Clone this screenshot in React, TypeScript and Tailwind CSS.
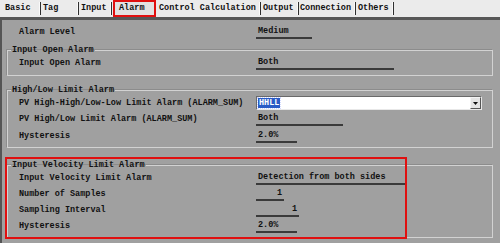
import React from "react";

const TABS = [
  { label: "Basic", cls: "w-[41px] pl-[5px]" },
  { label: "Tag", cls: "w-[38px] pl-[2px]" },
  { label: "Input", cls: "w-[33px] pl-[2px]" },
  { label: "Alarm", cls: "w-[43px] pl-[4px]", active: true },
  { label: "Control Calculation", cls: "w-[104px] pl-[2px]" },
  { label: "Output", cls: "w-[38px] pl-[2px]" },
  { label: "Connection", cls: "w-[57px] pl-[1px]" },
  { label: "Others", cls: "w-[38px] pl-[2px]" },
];

function Value({
  text,
  w,
  right,
}: {
  text: string;
  w: string;
  right?: boolean;
}) {
  return (
    <div
      className={`${w} h-[13px] border-b-2 border-[#3a3a3a] px-[2px] leading-[10px] ${
        right ? "text-right" : ""
      }`}
    >
      {text}
    </div>
  );
}

function Row({
  label,
  children,
  inGroup,
}: {
  label: string;
  children: React.ReactNode;
  inGroup?: boolean;
}) {
  return (
    <div className="flex h-[16px] items-center">
      <div
        className={`${inGroup ? "w-[248px] pl-[11px]" : "w-[249px] pl-[12px]"} shrink-0`}
      >
        {label}
      </div>
      {children}
    </div>
  );
}

function Group({
  title,
  className,
  children,
}: {
  title: string;
  className?: string;
  children: React.ReactNode;
}) {
  return (
    <fieldset
      className={`border border-[#d2d2d2] shadow-[-1px_-1px_0_#8c8c8c] ${className ?? ""}`}
    >
      <legend className="ml-[3px] px-[1px] leading-[10px]">{title}</legend>
      {children}
    </fieldset>
  );
}

export default function App() {
  return (
    <div
      className="relative h-[243px] w-[500px] overflow-hidden bg-[#a0a0a0] text-[8.5px] font-bold text-[#111]"
      style={{ fontFamily: '"Liberation Mono", "DejaVu Sans Mono", monospace' }}
    >
      {/* Tab strip */}
      <div className="flex h-[17px] items-center bg-[#ebebeb]">
        {TABS.map((t) =>
          t.active ? (
            <div
              key={t.label}
              className={`${t.cls} ml-[1px] mr-[1px] flex h-[17px] items-center border-2 border-[#e01010] bg-[#e2e2e2]`}
            >
              {t.label}
            </div>
          ) : (
            <div key={t.label} className={`${t.cls} flex h-[17px] items-center`}>
              <span className="flex-1">{t.label}</span>
              <span className="h-[13px] w-[2px] border-l border-[#fafafa] bg-[#303030]" />
            </div>
          )
        )}
      </div>
      <div className="h-[3px] bg-[#575757]" />

      {/* Page */}
      <div className="relative h-[223px] border-l-2 border-[#555] pl-[5px] pr-[7px] pt-[4px]">
        <Row label="Alarm Level">
          <Value text="Medium" w="w-[56px]" />
        </Row>

        <Group title="Input Open Alarm" className="mt-[5px] pb-[4px]">
          <Row label="Input Open Alarm" inGroup>
            <Value text="Both" w="w-[138px]" />
          </Row>
        </Group>

        <Group title="High/Low Limit Alarm" className="mt-[9px] pb-[3px]">
          <Row label="PV High-High/Low-Low Limit Alarm (ALARM_SUM)" inGroup>
            <div className="flex h-[14px] w-[226px] items-center border border-[#6a6a6a] border-r-[#e8e8e8] border-b-[#e8e8e8] bg-white">
              <span className="ml-[1px] bg-[#2a5bc6] px-[1px] leading-[10px] text-white outline-1 outline-dotted outline-[#cfd8ff]">
                HHLL
              </span>
              <span className="flex-1" />
              <span className="flex h-[12px] w-[11px] items-center justify-center border border-[#f4f4f4] border-r-[#555] border-b-[#555] bg-[#e4e4e4]">
                <svg width="5" height="3" viewBox="0 0 5 3">
                  <path d="M0 0h5L2.5 3z" fill="#111" />
                </svg>
              </span>
            </div>
          </Row>
          <Row label="PV High/Low Limit Alarm (ALARM_SUM)" inGroup>
            <Value text="Both" w="w-[87px]" />
          </Row>
          <div className="mt-[1px]">
            <Row label="Hysteresis" inGroup>
              <Value text="2.0%" w="w-[41px]" />
            </Row>
          </div>
        </Group>

        <Group title="Input Velocity Limit Alarm" className="mt-[12px] pb-[3px]">
          <Row label="Input Velocity Limit Alarm" inGroup>
            <Value text="Detection from both sides" w="w-[149px]" />
          </Row>
          <Row label="Number of Samples" inGroup>
            <Value text="1" w="w-[28px]" right />
          </Row>
          <Row label="Sampling Interval" inGroup>
            <Value text="1" w="w-[43px]" right />
          </Row>
          <Row label="Hysteresis" inGroup>
            <Value text="2.0%" w="w-[41px]" />
          </Row>
        </Group>

        {/* annotation */}
        <div className="pointer-events-none absolute left-[3px] top-[137px] h-[82px] w-[402px] border-2 border-[#e01010]" />
      </div>
    </div>
  );
}
